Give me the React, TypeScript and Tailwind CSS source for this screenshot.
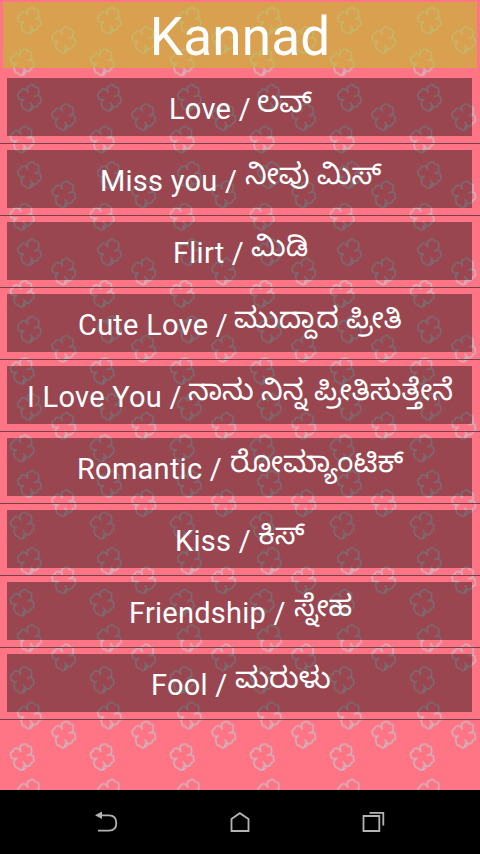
const rows = [
  { en: "Love /", kn: "ಲವ್", start: "pl-[162px]", width: "w-[88px]" },
  { en: "Miss you /", kn: "ನೀವು ಮಿಸ್", start: "pl-[93px]", width: "w-[145px]" },
  { en: "Flirt /", kn: "ಮಿಡಿ", start: "pl-[166px]", width: "w-[78px]" },
  { en: "Cute Love /", kn: "ಮುದ್ದಾದ ಪ್ರೀತಿ", start: "pl-[71px]", width: "w-[156px]" },
  { en: "I Love You /", kn: "ನಾನು ನಿನ್ನ ಪ್ರೀತಿಸುತ್ತೇನೆ", start: "pl-[20px]", width: "w-[161px]" },
  { en: "Romantic /", kn: "ರೋಮ್ಯಾಂಟಿಕ್", start: "pl-[70px]", width: "w-[153px]" },
  { en: "Kiss /", kn: "ಕಿಸ್", start: "pl-[168px]", width: "w-[83px]" },
  { en: "Friendship /", kn: "ಸ್ನೇಹ", start: "pl-[122px]", width: "w-[165px]" },
  { en: "Fool /", kn: "ಮರುಳು", start: "pl-[144px]", width: "w-[84px]" },
];

const clover =
  "M11.300 9 C9.500 5 10.500 2 13 1.800 C15 .2 17.500 .8 18 3 C21 3 23 5 21.800 7.500 C23 9.500 21.500 11.500 17.800 12.500 C22 11 24.500 12.500 23.800 15.200 C25.200 17.500 23.800 19.500 21.800 19.500 C21.300 22.500 18.500 23.800 17 22.800 C15.300 22.500 14.500 21 13.800 19.300 C16.500 22.500 16.500 25 14.500 26 C12.500 27.800 9.500 27 8.500 25 C6 25 4.500 23 5 21 C3.500 19 4.500 17 7.200 15.300 C3 16.500 .8 14.500 1.200 12.500 C.2 10.500 1.500 8.500 3.500 8 C3.800 5.500 6.500 4.500 8 5.500 C9.500 5.500 10.500 7 11.300 9 M13 26.500 L14.300 22.500";

function Clovers() {
  return (
    <svg className="absolute inset-0 h-full w-full" aria-hidden="true">
      <defs>
        <pattern id="clovers" width="80" height="77.2" patternUnits="userSpaceOnUse">
          <g fill="none" stroke="#d2b0ba" strokeWidth="1.6" strokeLinejoin="round">
            <path d={clover} transform="translate(16.800 6.700)" />
            <path d={clover} transform="translate(51.200 25.900)" />
            <path d={clover} transform="translate(9.600 48.300)" />
          </g>
        </pattern>
      </defs>
      <rect width="100%" height="100%" fill="url(#clovers)" />
    </svg>
  );
}

export default function App() {
  return (
    <div className="flex h-[854px] w-[480px] flex-col overflow-hidden bg-black font-['Roboto','Noto_Sans_Kannada','Noto_Sans',sans-serif] text-white">
      <main className="relative h-[790px] overflow-hidden bg-[#ff7585]">
        <Clovers />
        <div className="relative pt-[2px]">
          <header className="mx-[3px] flex h-[66px] items-center justify-center bg-[#bebc2b]/60">
            <h1 className="whitespace-nowrap pt-[4px] text-[53px] leading-[66px] tracking-[0.2px]">Kannad</h1>
          </header>
          <ul className="pt-[4px]">
            {rows.map((row) => (
              <li key={row.en} className="h-[72px] border-b border-[#783e4a] px-[7px] pt-[6px]">
                <div className={`flex h-[58px] w-[465px] items-start whitespace-nowrap bg-black/40 ${row.start}`}>
                  <span className={`shrink-0 pt-[15px] text-[29px] leading-[33px] tracking-[0.25px] ${row.width}`}>
                    {row.en}
                  </span>
                  <span className="pt-[8px] text-[29.4px] leading-[33px]">{row.kn}</span>
                </div>
              </li>
            ))}
          </ul>
        </div>
      </main>
      <nav className="flex h-[64px] items-center justify-between bg-black px-[94px]">
        <svg className="h-[26px] w-[26px]" viewBox="94 809 26 26" fill="none" stroke="#b4b4b4" strokeWidth="1.8">
          <path d="M99 815.300H109C114 815.300 116.300 818.500 116.300 823C116.300 828 113.500 830.700 109 830.700H98" />
          <path d="M95 815.300L102 811.500V819Z" fill="#b4b4b4" stroke="none" />
        </svg>
        <svg className="h-[26px] w-[26px]" viewBox="227 809 26 26" fill="none" stroke="#b4b4b4" strokeWidth="1.8">
          <path d="M231.500 831V819L239.800 813.200L248.500 819V831Z" />
        </svg>
        <svg className="h-[26px] w-[26px]" viewBox="360 809 26 26" fill="none" stroke="#b4b4b4" strokeWidth="1.800">
          <path d="M363.500 816H379.300V831H363.500Z" />
          <path d="M369.500 812.800H383.300V825.500" />
        </svg>
      </nav>
    </div>
  );
}
